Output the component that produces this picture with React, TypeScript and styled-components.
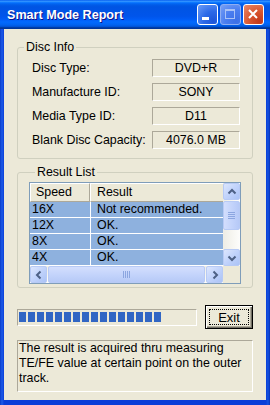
import styled, { createGlobalStyle } from "styled-components";

const GlobalStyle = createGlobalStyle`
  html, body { margin: 0; padding: 0; background: #ffffff; }
  body { font-family: "Liberation Sans", Arial, sans-serif; font-size: 12.4px; color: #000; }
`;

const Frame = styled.div`
  width: 270px;
  height: 405px;
  box-sizing: border-box;
  display: flex;
  flex-direction: column;
  background: linear-gradient(to right, #0A3BC8 0, #1C5BE8 2px, #0A3ED8 4px, #0A3ED8 266px, #1553E0 268px, #0730B8 270px);
  overflow: hidden;
`;

const TitleBar = styled.div`
  flex: none;
  height: 29px;
  display: flex;
  align-items: center;
  padding: 0 6px 0 7px;
  background: linear-gradient(
    to bottom,
    #0058ee 0%, #3593ff 4%, #288eff 6%, #127dff 8%, #036ffc 10%, #0262ee 14%,
    #0057e5 20%, #0054e3 24%, #0055eb 56%, #005bf5 66%, #026afe 76%, #0062ef 86%,
    #0052d6 92%, #0040ab 94%, #003092 100%
  );
`;

const TitleText = styled.span`
  flex: 1;
  color: #fff;
  font-weight: bold;
  font-size: 12.6px;
  text-shadow: 1px 1px #0f1089;
  padding-top: 1px;
`;

const TitleButtons = styled.div`
  display: flex;
  gap: 2px;
`;

const CapButton = styled.div<{ $kind: "min" | "max" | "close" }>`
  width: 21px;
  height: 21px;
  box-sizing: border-box;
  border: 1px solid ${(p) => (p.$kind === "max" ? "#8eaef2" : "#ffffff")};
  border-radius: 3px;
  display: flex;
  background: ${(p) =>
    p.$kind === "close"
      ? "radial-gradient(circle at 80% 85%, #c4391a 0, #d9562f 45%, #e98a6c 100%)"
      : p.$kind === "max"
      ? "radial-gradient(circle at 80% 85%, #3b6fe6 0, #4a7ef0 50%, #7aa1f4 100%)"
      : "radial-gradient(circle at 80% 85%, #1d55d9 0, #2d6ae8 45%, #6b9cf8 100%)"};
`;

const Body = styled.div`
  flex: 1;
  margin: 0 4px 5px 4px;
  background: #ece9d8;
  padding: 11px 13px 8px 13px;
  display: flex;
  flex-direction: column;
`;

const Group = styled.fieldset<{ $pad: string }>`
  margin: 0;
  min-width: 0;
  padding: ${(p) => p.$pad};
  border: 1px solid #d0d0bf;
  border-radius: 3px;
  & + & { margin-top: 6px; }
`;

const Legend = styled.legend`
  margin-left: 6px;
  padding: 0 2px;
  line-height: 15px;
`;

const InfoList = styled.div`
  display: flex;
  flex-direction: column;
  gap: 6px;
`;

const InfoRow = styled.div`
  display: flex;
  align-items: center;
  height: 18px;
  padding-left: 14px;
`;

const InfoLabel = styled.span`
  width: 120px;
  white-space: nowrap;
`;

const InfoValue = styled.div`
  width: 86px;
  height: 16px;
  border: 1px solid;
  border-color: #aca899 #ffffff #ffffff #aca899;
  text-align: center;
  line-height: 17px;
`;

const ListBox = styled.div`
  height: 100px;
  border: 1px solid #7f9db9;
  display: grid;
  grid-template-columns: 1fr 17px;
  grid-template-rows: 1fr 17px;
  background: #fff;
`;

const ListView = styled.div`
  overflow: hidden;
`;

const ListHeader = styled.div`
  display: grid;
  grid-template-columns: 60px 160px;
  height: 19px;
`;

const HeaderCell = styled.div<{ $pad: number }>`
  box-sizing: border-box;
  padding-left: ${(p) => p.$pad}px;
  background: #ece9d8;
  border-top: 1px solid #fff;
  border-left: 1px solid #fff;
  border-right: 1px solid #aca899;
  border-bottom: 1px solid #aca899;
  line-height: 17px;
`;

const ListRow = styled.div`
  display: grid;
  grid-template-columns: 60px 160px;
  height: 16px;
  border-bottom: 1px solid #fff;
  box-sizing: border-box;
  background: #8eb1de;
`;

const Cell = styled.div<{ $pad: number }>`
  padding-left: ${(p) => p.$pad}px;
  line-height: 15px;
  white-space: nowrap;
  & + & { border-left: 1px solid #fff; }
`;

const VScroll = styled.div`
  display: flex;
  flex-direction: column;
  background: linear-gradient(to right, #eeede5, #fdfdfb);
`;

const HScroll = styled.div`
  display: flex;
  background: linear-gradient(to bottom, #eeede5, #fdfdfb);
`;

const ScrollBtn = styled.div`
  flex: none;
  width: 17px;
  height: 17px;
  box-sizing: border-box;
  border: 1px solid #b7caf5;
  border-radius: 2px;
  background: linear-gradient(135deg, #dce6fd 0%, #c1d3fb 50%, #abc3f6 100%);
  display: flex;
  align-items: center;
  justify-content: center;
`;

const Thumb = styled.div<{ $vertical?: boolean }>`
  box-sizing: border-box;
  border: 1px solid #b7caf5;
  border-radius: 2px;
  background: linear-gradient(${(p) => (p.$vertical ? "to right" : "to bottom")}, #d3defd, #c4d4fb 50%, #b6c9f7);
  display: flex;
  align-items: center;
  justify-content: center;
  ${(p) => (p.$vertical ? "height: 29px; margin-top: 1px; width: 17px;" : "flex: 1; height: 17px; margin: 0 1px;")}
`;

const Track = styled.div`
  flex: 1;
`;

const Corner = styled.div`
  background: #ece9d8;
`;

const BottomRow = styled.div`
  margin-top: 17px;
  height: 24px;
  display: flex;
  align-items: center;
  justify-content: space-between;
`;

const Progress = styled.div`
  width: 180px;
  height: 17px;
  box-sizing: border-box;
  border: 1px solid;
  border-color: #aca899 #ffffff #ffffff #aca899;
  padding: 2px 1px 3px 1px;
  display: flex;
  gap: 2px;
`;

const Block = styled.div`
  width: 7px;
  height: 10px;
  background: #3166c4;
`;

const ExitButton = styled.div`
  width: 48px;
  height: 24px;
  box-sizing: border-box;
  border: 1px solid #000;
  background: #ece9d8;
  box-shadow: inset 1px 1px #fff, inset -1px -1px #716f64, inset -2px -2px #aca899;
  padding: 3px;
  display: flex;
`;

const FocusRing = styled.span`
  flex: 1;
  border: 1px dotted #000;
  display: flex;
  align-items: center;
  justify-content: center;
  font-size: 13px;
`;

const Note = styled.div`
  margin-top: 11px;
  height: 52px;
  box-sizing: border-box;
  border: 1px solid;
  border-color: #aca899 #ffffff #ffffff #aca899;
  line-height: 15px;
  padding-left: 1px;
  white-space: nowrap;
  overflow: hidden;
`;

const Arrow = ({ dir }: { dir: "up" | "down" | "left" | "right" }) => {
  const pts = {
    up: "4.5,9.5 8,6 11.5,9.5",
    down: "4.5,6.5 8,10 11.5,6.5",
    left: "9.5,4.5 6,8 9.5,11.5",
    right: "6.5,4.5 10,8 6.5,11.5",
  }[dir];
  return (
    <svg width="15" height="15" viewBox="0 0 15 15">
      <polyline points={pts} fill="none" stroke="#4d6185" strokeWidth="2" />
    </svg>
  );
};

const Grip = ({ vertical }: { vertical?: boolean }) => (
  <svg width="8" height="8" viewBox="0 0 8 8">
    {[0, 2, 4, 6].map((o) =>
      vertical ? (
        <line key={o} x1="0" y1={o + 0.5} x2="7" y2={o + 0.5} stroke="#8ca6e0" />
      ) : (
        <line key={o} x1={o + 0.5} y1="0" x2={o + 0.5} y2="7" stroke="#8ca6e0" />
      )
    )}
  </svg>
);

const info = [
  ["Disc Type:", "DVD+R"],
  ["Manufacture ID:", "SONY"],
  ["Media Type ID:", "D11"],
  ["Blank Disc Capacity:", "4076.0 MB"],
];

const results = [
  ["16X", "Not recommended."],
  ["12X", "OK."],
  ["8X", "OK."],
  ["4X", "OK."],
];

const App = () => {
  return (
    <>
      <GlobalStyle />
      <Frame>
        <TitleBar>
          <TitleText>Smart Mode Report</TitleText>
          <TitleButtons>
            <CapButton $kind="min">
              <svg width="19" height="19" viewBox="0 0 19 19">
                <rect x="4" y="12" width="7" height="3" fill="#fff" />
              </svg>
            </CapButton>
            <CapButton $kind="max">
              <svg width="19" height="19" viewBox="0 0 19 19">
                <rect x="4.5" y="4.5" width="9" height="9" fill="none" stroke="#a9c2f6" />
                <rect x="4" y="4" width="10" height="2" fill="#a9c2f6" />
              </svg>
            </CapButton>
            <CapButton $kind="close">
              <svg width="19" height="19" viewBox="0 0 19 19">
                <path d="M5 5 L13 13 M13 5 L5 13" stroke="#fff" strokeWidth="2" />
              </svg>
            </CapButton>
          </TitleButtons>
        </TitleBar>
        <Body>
          <Group $pad="4px 0 9px 0">
            <Legend>Disc Info</Legend>
            <InfoList>
              {info.map(([label, value]) => (
                <InfoRow key={label}>
                  <InfoLabel>{label}</InfoLabel>
                  <InfoValue>{value}</InfoValue>
                </InfoRow>
              ))}
            </InfoList>
          </Group>
          <Group $pad="2px 11px 3px 11px">
            <Legend>Result List</Legend>
            <ListBox>
              <ListView>
                <ListHeader>
                  <HeaderCell $pad={5}>Speed</HeaderCell>
                  <HeaderCell $pad={6}>Result</HeaderCell>
                </ListHeader>
                {results.map(([speed, result]) => (
                  <ListRow key={speed}>
                    <Cell $pad={2}>{speed}</Cell>
                    <Cell $pad={6}>{result}</Cell>
                  </ListRow>
                ))}
              </ListView>
              <VScroll>
                <ScrollBtn><Arrow dir="up" /></ScrollBtn>
                <Thumb $vertical><Grip vertical /></Thumb>
                <Track />
                <ScrollBtn><Arrow dir="down" /></ScrollBtn>
              </VScroll>
              <HScroll>
                <ScrollBtn><Arrow dir="left" /></ScrollBtn>
                <Thumb><Grip /></Thumb>
                <ScrollBtn><Arrow dir="right" /></ScrollBtn>
              </HScroll>
              <Corner />
            </ListBox>
          </Group>
          <BottomRow>
            <Progress>
              {Array.from({ length: 16 }, (_, i) => (
                <Block key={i} />
              ))}
            </Progress>
            <ExitButton>
              <FocusRing>Exit</FocusRing>
            </ExitButton>
          </BottomRow>
          <Note>
            The result is acquired thru measuring
            <br />
            TE/FE value at certain point on the outer
            <br />
            track.
          </Note>
        </Body>
      </Frame>
    </>
  );
};

export default App;
